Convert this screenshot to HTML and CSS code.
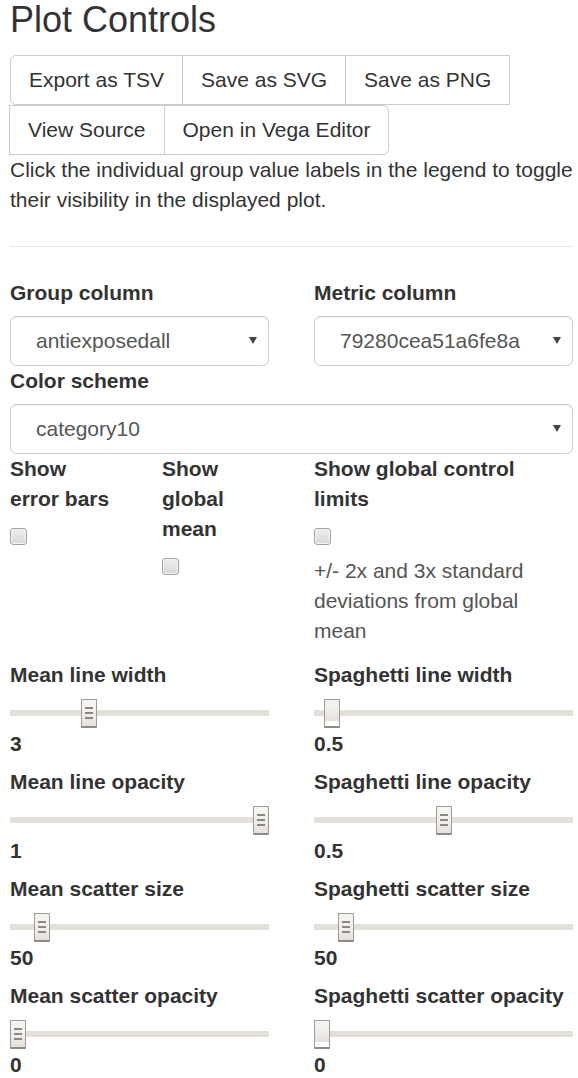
FILE: index.html
```html
<!DOCTYPE html>
<html lang="en">
<head>
<meta charset="utf-8">
<title>Plot Controls</title>
<link rel="stylesheet" href="styles.css">
</head>
<body>
<div class="page">
  <h3 class="title">Plot Controls</h3>
  <div class="btn-group">
    <button class="btn" type="button">Export as TSV</button>
    <button class="btn" type="button">Save as SVG</button>
    <button class="btn" type="button">Save as PNG</button>
    <button class="btn" type="button">View Source</button>
    <button class="btn" type="button">Open in Vega Editor</button>
  </div>
  <p class="note">Click the individual group value labels in the legend to toggle their visibility in the displayed plot.</p>
  <hr class="rule">

  <div class="two">
    <div class="field">
      <label class="ctl-label">Group column</label>
      <div class="select-wrap"><select class="select"><option>antiexposedall</option></select></div>
    </div>
    <div class="field">
      <label class="ctl-label">Metric column</label>
      <div class="select-wrap"><select class="select"><option>79280cea51a6fe8a</option></select></div>
    </div>
  </div>
  <div class="field">
    <label class="ctl-label">Color scheme</label>
    <div class="select-wrap"><select class="select"><option>category10</option></select></div>
  </div>

  <div class="three">
    <div class="field">
      <label class="ctl-label">Show error bars</label>
      <input type="checkbox" class="check">
    </div>
    <div class="field">
      <label class="ctl-label">Show global mean</label>
      <input type="checkbox" class="check">
    </div>
    <div class="field">
      <label class="ctl-label">Show global control limits</label>
      <input type="checkbox" class="check">
      <p class="help">+/- 2x and 3x standard deviations from global mean</p>
    </div>
  </div>

  <div class="two">
    <div class="field">
      <label class="ctl-label">Mean line width</label>
      <input type="range" class="range" min="0.1" max="10" step="any" value="3">
      <div class="value">3</div>
    </div>
    <div class="field">
      <label class="ctl-label">Spaghetti line width</label>
      <input type="range" class="range nogrip" min="0.1" max="10" step="any" value="0.5">
      <div class="value">0.5</div>
    </div>
    <div class="field">
      <label class="ctl-label">Mean line opacity</label>
      <input type="range" class="range" min="0" max="1" step="any" value="1">
      <div class="value">1</div>
    </div>
    <div class="field">
      <label class="ctl-label">Spaghetti line opacity</label>
      <input type="range" class="range" min="0" max="1" step="any" value="0.5">
      <div class="value">0.5</div>
    </div>
    <div class="field">
      <label class="ctl-label">Mean scatter size</label>
      <input type="range" class="range" min="0" max="500" step="any" value="50">
      <div class="value">50</div>
    </div>
    <div class="field">
      <label class="ctl-label">Spaghetti scatter size</label>
      <input type="range" class="range" min="0" max="500" step="any" value="50">
      <div class="value">50</div>
    </div>
    <div class="field">
      <label class="ctl-label">Mean scatter opacity</label>
      <input type="range" class="range" min="0" max="1" step="any" value="0">
      <div class="value">0</div>
    </div>
    <div class="field">
      <label class="ctl-label">Spaghetti scatter opacity</label>
      <input type="range" class="range nogrip" min="0" max="1" step="any" value="0">
      <div class="value">0</div>
    </div>
  </div>
</div>
</body>
</html>
```

FILE: styles.css
```css
* {
  box-sizing: border-box;
}

body {
  margin: 0;
  background: #fff;
  color: #333;
  font-family: "Liberation Sans", Arial, sans-serif;
  font-size: 21px;
  line-height: 30px;
}

.page {
  padding: 0 5px 0 10px;
}

.title {
  margin: 0 0 15px;
  font-size: 36px;
  font-weight: normal;
  line-height: 39.6px;
  color: #333;
}

.btn-group {
  display: flex;
  flex-wrap: wrap;
}

.btn {
  font: inherit;
  color: #333;
  background: #fff;
  border: 1px solid #ccc;
  padding: 9px 18px;
  line-height: 30px;
  height: 50px;
  margin: 0 0 0 -1px;
  border-radius: 0;
}

.btn:first-child {
  margin-left: 0;
  border-radius: 6px 0 0 6px;
}

.btn:last-child {
  border-radius: 0 6px 6px 0;
}

.note {
  margin: 0 0 15px;
}

.rule {
  margin: 31px 0;
  height: 0;
  border: 0;
  border-top: 1px solid #e6e6e6;
}

.two {
  display: grid;
  grid-template-columns: 1fr 1fr;
  column-gap: 45px;
}

.three {
  display: grid;
  grid-template-columns: 107px 107px 1fr;
  column-gap: 45px;
}

.field {
  display: flex;
  flex-direction: column;
  align-items: stretch;
}

.ctl-label {
  display: block;
  font-weight: bold;
  margin-bottom: 8px;
  color: #333;
}

.select-wrap {
  position: relative;
}

.select {
  -webkit-appearance: none;
  appearance: none;
  display: block;
  width: 100%;
  height: 50px;
  font: inherit;
  color: #555;
  background: #fff;
  border: 1px solid #ccc;
  border-radius: 6px;
  padding: 0 30px 0 25px;
  box-shadow: inset 0 1px 1px rgba(0, 0, 0, 0.075);
}

.select-wrap::after {
  content: "";
  position: absolute;
  right: 12px;
  top: 50%;
  margin-top: -3.5px;
  border-left: 4px solid transparent;
  border-right: 4px solid transparent;
  border-top: 7px solid #444;
  pointer-events: none;
}

.check {
  -webkit-appearance: none;
  appearance: none;
  display: block;
  align-self: flex-start;
  width: 17px;
  height: 17px;
  margin: 6px 0 3.5px;
  border: 1px solid #a3a3a3;
  border-radius: 3px;
  background: linear-gradient(#eeeeee, #d8d8d8);
  box-shadow: inset 0 0 0 1px #f3f3f3;
}

.help {
  margin: 7.5px 0 14px;
  color: #555;
}

.range {
  -webkit-appearance: none;
  appearance: none;
  display: block;
  width: 100%;
  height: 31px;
  margin: 0;
  padding: 0;
  background: transparent;
}

.range::-webkit-slider-runnable-track {
  height: 6px;
  background: #e3dfd9;
  border: 0;
}

.range::-webkit-slider-thumb {
  -webkit-appearance: none;
  appearance: none;
  width: 16px;
  height: 29px;
  margin-top: -11.5px;
  border: 1px solid #a19b95;
  border-bottom: 2px solid #8f8983;
  border-radius: 1px;
  background-image:
    linear-gradient(#8d8781, #8d8781),
    linear-gradient(#8d8781, #8d8781),
    linear-gradient(#8d8781, #8d8781),
    linear-gradient(to bottom, #f7f6f4 0%, #f0eeeb 55%, #e4e0db 100%);
  background-size: 8px 2px, 8px 2px, 8px 2px, 100% 100%;
  background-position: center calc(50% - 5px), center center, center calc(50% + 5px), 0 0;
  background-repeat: no-repeat;
}

.range.nogrip::-webkit-slider-thumb {
  background-image: linear-gradient(to bottom, #f7f6f4 0%, #f0eeeb 55%, #e4e0db 100%);
  background-size: 100% 100%;
}

.value {
  font-weight: bold;
  margin-bottom: 8px;
}
```
